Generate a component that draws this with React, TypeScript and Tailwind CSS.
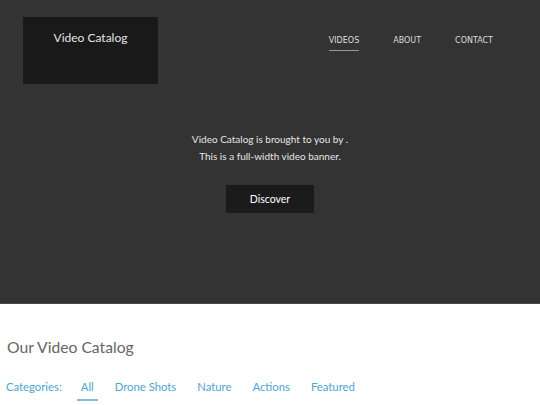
const categories = ["All", "Drone Shots", "Nature", "Actions", "Featured"]

export default function App() {
  return (
    <div className="min-h-[405px] bg-white font-['Lato','Noto_Sans',sans-serif]">
      {/* Banner */}
      <header className="h-[304px] bg-[#333333] border-b border-[#4a4a4a] flex flex-col">
        <div className="flex items-start justify-between pt-[17px] pl-[23px] pr-[47px]">
          <div className="w-[135px] h-[67px] bg-[#191919] flex justify-center pt-[15px]">
            <span className="text-[12px] text-[#e4e4e4] leading-none">Video Catalog</span>
          </div>
          <nav className="flex gap-[34px] pt-[18px] font-['DejaVu_Sans',sans-serif] text-[8px] text-[#dddddd] uppercase">
            <a className="pb-[3px] border-b border-[#9a9a9a]">Videos</a>
            <a>About</a>
            <a>Contact</a>
          </nav>
        </div>
        <div className="flex flex-col items-center mt-[47px] text-[10px] leading-[17px] text-[#e6e6e6]">
          <p>Video Catalog is brought to you by .</p>
          <p>This is a full-width video banner.</p>
          <button className="mt-[20px] w-[88px] h-[28px] bg-[#1b1b1b] text-white text-[10.5px]">Discover</button>
        </div>
      </header>

      {/* Catalog */}
      <section className="px-[7px] pt-[36px]">
        <h2 className="text-[15.7px] text-[#666666] leading-none">Our Video Catalog</h2>
        <div className="flex items-start mt-[23px] text-[11.3px] text-[#4ea5cf]">
          <span className="mr-[19px] -ml-[1px]">Categories:</span>
          <ul className="flex gap-[21px]">
            {categories.map((c, i) => (
              <li
                key={c}
                className={i === 0 ? "px-[4px] -mx-[4px] pb-[3px] border-b-2 border-[#7fc0de]" : ""}
              >
                {c}
              </li>
            ))}
          </ul>
        </div>
      </section>
    </div>
  )
}
